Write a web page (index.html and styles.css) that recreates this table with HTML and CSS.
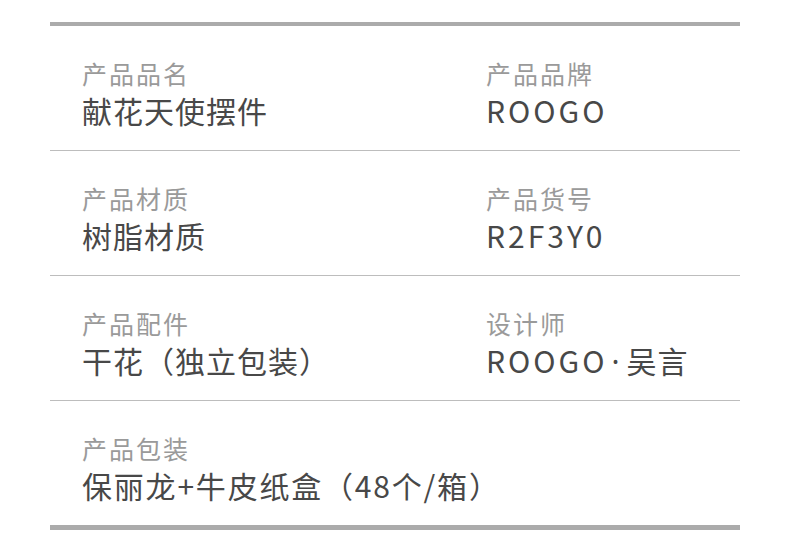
FILE: index.html
```html
<!DOCTYPE html>
<html lang="zh">
<head>
<meta charset="utf-8">
<link rel="stylesheet" href="styles.css">
</head>
<body>
<div class="spec">
  <div class="row">
    <div class="cell"><div class="label">产品品名</div><div class="value">献花天使摆件</div></div>
    <div class="cell"><div class="label">产品品牌</div><div class="value latin">ROOGO</div></div>
  </div>
  <div class="row">
    <div class="cell"><div class="label">产品材质</div><div class="value">树脂材质</div></div>
    <div class="cell"><div class="label">产品货号</div><div class="value latin">R2F3Y0</div></div>
  </div>
  <div class="row">
    <div class="cell"><div class="label">产品配件</div><div class="value">干花（独立包装）</div></div>
    <div class="cell"><div class="label">设计师</div><div class="value latin">ROOGO<span class="dot">·</span><span class="cjk">吴言</span></div></div>
  </div>
  <div class="row last">
    <div class="cell wide"><div class="label">产品包装</div><div class="value long">保丽龙+牛皮纸盒（48个/箱）</div></div>
  </div>
</div>
</body>
</html>
```
FILE: styles.css
```css
html, body {
  margin: 0;
  padding: 0;
  background: #ffffff;
}
body {
  font-family: "Noto Sans CJK SC", "Noto Sans", sans-serif;
  width: 790px;
  height: 560px;
  overflow: hidden;
}
.spec {
  margin: 22px 50px 0 50px;
  width: 690px;
  border-top: 4px solid #ababab;
  border-bottom: 5px solid #ababab;
}
.row {
  display: grid;
  grid-template-columns: 404px 1fr;
  height: 124px;
  border-bottom: 1px solid #bdbdbd;
}
.row.last {
  border-bottom: none;
}
.cell {
  padding: 31px 0 0 32px;
}
.wide {
  grid-column: 1 / -1;
}
.label {
  font-size: 25px;
  line-height: 32px;
  letter-spacing: 2px;
  color: #9a9a9a;
}
.value {
  margin-top: 1px;
  font-size: 30px;
  line-height: 40px;
  letter-spacing: 1px;
  color: #484848;
}
.long {
  letter-spacing: 1.8px;
}
.latin {
  letter-spacing: 3px;
}
.dot {
  font-family: "Noto Sans", sans-serif;
  letter-spacing: 0;
  margin: 0 7px 0 4px;
}
.cjk {
  letter-spacing: 1px;
}
```
